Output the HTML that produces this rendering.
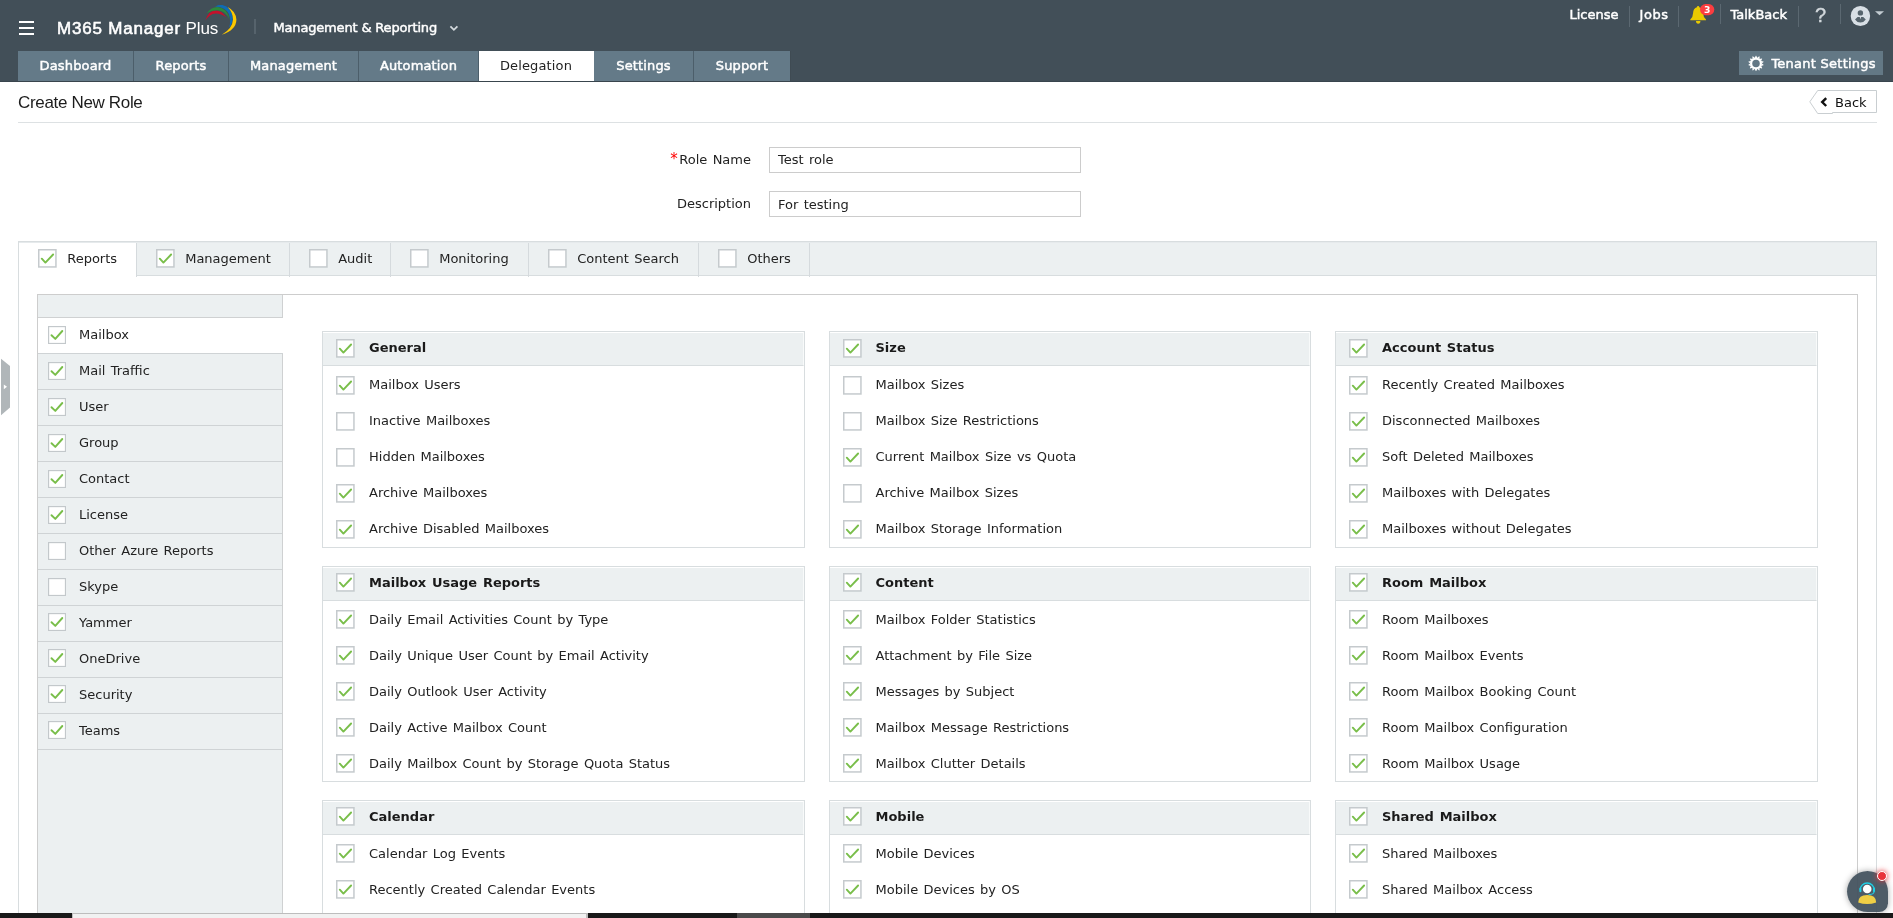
<!DOCTYPE html>
<html lang="en"><head><meta charset="utf-8"><title>M365 Manager Plus</title>
<style>
*{box-sizing:border-box;margin:0;padding:0}
html,body{width:1893px;height:918px;overflow:hidden;background:#fff}
body{position:relative;font-family:"DejaVu Sans","Liberation Sans",sans-serif;font-size:13px;color:#222}
#wrap{position:absolute;left:0;top:0;width:1893px;height:918px;overflow:hidden;will-change:transform;word-spacing:1.2px}
.hdr{position:absolute;left:0;top:0;width:1893px;height:82px;background:#424f58;border-bottom:1px solid #39454d;color:#fff;word-spacing:0}
.abs{position:absolute}
.burger{position:absolute;left:19px;top:21px;width:15px;height:14px}
.burger i{position:absolute;left:0;width:15px;height:2px;background:#fff}
.logo{position:absolute;left:57px;top:17.5px;font-family:"Liberation Sans",sans-serif;font-size:17px;line-height:22px;white-space:nowrap;color:#fff}
.logo b{font-weight:400;letter-spacing:.8px;-webkit-text-stroke:.55px #fff}
.logo span{letter-spacing:-.1px}
.vsep{position:absolute;width:1px;background:#5b6871}
.prod{position:absolute;left:273.5px;top:19px;font-size:13px;line-height:18px;white-space:nowrap;letter-spacing:-.17px;-webkit-text-stroke:.45px #fff}
.nav{position:absolute;left:18px;top:51px;height:30px;display:flex}
.nav a{display:block;height:30px;line-height:29px;text-align:center;letter-spacing:.15px;background:#647a88;border-right:1px solid #4c5e6a;color:#fff;font-size:13px;white-space:nowrap;text-decoration:none;-webkit-text-stroke:.45px #fff}
.nav a.act{background:#fff;color:#222;border-right-color:#fff;-webkit-text-stroke:0}
.top a{position:absolute;top:6px;font-size:13px;line-height:18px;color:#fff;white-space:nowrap;-webkit-text-stroke:.45px #fff}
.top a.q{font-family:"Liberation Sans",sans-serif;font-size:20px;top:4px;line-height:22px;color:#d3d9dd;-webkit-text-stroke:.4px #d3d9dd}
.tenant{position:absolute;left:1739px;top:51px;width:144px;height:24px;background:#637885;font-size:13px;line-height:24px;white-space:nowrap;-webkit-text-stroke:.45px #fff}
.tenant span{position:absolute;left:32.4px;top:.5px;letter-spacing:.25px}
.title{position:absolute;left:18px;top:92px;word-spacing:0;font-family:"Liberation Sans",sans-serif;font-size:17px;line-height:22px;color:#1c1c1c;white-space:nowrap;letter-spacing:-.33px}
.hr{position:absolute;left:18px;top:122px;width:1859px;height:1px;background:#dde1e3}
.backt{position:absolute;left:1835px;top:95px;font-size:13px;line-height:16px;color:#111;letter-spacing:0}
.flabel{position:absolute;font-size:13px;line-height:16px;color:#222;white-space:nowrap;text-align:right;width:200px}
.flabel em{color:#f00;font-style:normal;font-size:15px;line-height:0;position:relative;top:0;margin-right:1.5px}
.finput{position:absolute;left:769px;width:312px;height:26px;border:1px solid #ccc;background:#fff;font-size:13px;line-height:24px;padding-left:8px;color:#222;white-space:nowrap}
.outer{position:absolute;left:18px;top:241px;width:1859px;height:700px;border:1px solid #d8dddf;border-bottom:0;background:#fff}
.tabs{position:absolute;left:0;top:0;width:1857px;height:34px;background:#ecf0f1;border-bottom:1px solid #d8dddf;display:flex}
.tabs::before{content:"";position:absolute;left:0;top:0;width:1857px;height:1px;background:#e6eaec;z-index:2}
.tab{position:relative;height:34px;white-space:nowrap;flex:none}
.tab::after{content:"";position:absolute;right:0;top:1px;width:1px;height:34px;background:#d5dadd}
.tab.act{background:#fff;height:35px}
.tab .cb{position:absolute;left:19px;top:7px}
.tab .lbl{position:absolute;left:48.2px;top:0;line-height:33px}
.cb{display:block}
.inner{position:absolute;left:37px;top:294px;width:1821px;height:640px;border:1px solid #cdcdcd;border-bottom:0;background:#fff}
.side{position:absolute;left:0;top:0;width:245px;height:640px;background:#ecf0f1;border-right:1px solid #cfd1d2}
.sidehead{height:23px;border-bottom:1px solid #cfd1d2}
.sitem{height:36px;border-bottom:1px solid #cfd3d5;position:relative;white-space:nowrap}
.sitem.act{background:#fff;width:245px}
.sitem .cb{position:absolute;left:10px;top:8px}
.sitem.lo .cb{top:7px}
.sitem .lbl{position:absolute;left:41px;top:0;line-height:34px}
.col{position:absolute;top:36px;width:483px}
.c0{left:284px}.c1{left:791px;width:482px}.c2{left:1297px}
.c1 .lbl{margin-left:-.5px}
.card{border:1px solid #d8dddf;margin-bottom:18px;padding-bottom:1px;background:#fff}
.chead{height:34px;background:#ecf0f1;border-top:1px solid #fff;border-right:1px solid #f8fafa;border-bottom:1px solid #d8dddf;position:relative;font-weight:700;color:#1a1a1a;white-space:nowrap}
.chead .cb{position:absolute;left:13px;top:6px}
.chead .lbl{position:absolute;left:46px;top:-1px;line-height:32px}
.row{height:36px;position:relative;white-space:nowrap}
.row .cb{position:absolute;left:13px;top:10px}
.row .lbl{position:absolute;left:46px;top:0;line-height:37px}
.card.k1{padding-bottom:0}
.card.k2{height:180px}
.k1 .cb,.k2 .cb{margin-top:-.6px}
.bottombar{position:absolute;left:0;top:913px;width:1893px;height:5px;background:#191919}
.bottombar .lt{position:absolute;left:72px;top:0;width:516px;height:5px;background:#f1f1f1;border:solid #bdbdbd;border-width:1.5px 2px 0 1.5px}
.bottombar .gr{position:absolute;left:737px;top:0;width:73px;height:5px;background:#4a4a4a}
.chat{position:absolute;left:1847px;top:871px;width:41px;height:41px;background:rgba(67,82,93,.94);border-radius:21px 21px 9px 21px;box-shadow:0 0 6px rgba(0,0,0,.35)}
.chatdot{position:absolute;left:1877px;top:871px;width:10px;height:10px;border-radius:5px;background:#e8333a;border:1px solid #fff;box-shadow:0 0 5px 1px rgba(232,51,58,.7)}

</style></head>
<body>
<div id="wrap">
<div class="hdr">
 <div class="burger"><i style="top:0"></i><i style="top:6px"></i><i style="top:12px"></i></div>
 <div class="logo"><b>M365 Manager</b><span> Plus</span></div>
 <svg class="abs" style="left:200px;top:0" width="40" height="40" viewBox="0 0 40 40">
  <path d="M5.2 20.8 Q8.2 10.4 15.8 10.4 Q22.2 10.6 26.2 17.2 Q21.4 13.4 15.8 13.4 Q9.6 13.6 5.2 20.8Z" fill="#c4112b"/>
  <path d="M6.6 13.2 Q11.5 7 17.8 7.1 Q27.2 8.2 29.8 19.8 Q25.4 10.6 17.6 10.3 Q11.8 10 6.6 13.2Z" fill="#2c8a3c"/>
  <path d="M15 6.4 Q18.6 4.6 22.4 5 Q31.4 7.2 32.7 17.4 Q32.8 23.4 29.2 27.6 Q31.4 20 28.6 13.6 Q25.2 6.8 15 6.4Z" fill="#0e6cb6"/>
  <path d="M27.6 7 Q36 11.2 36.4 19.8 Q36.2 30 21.8 34.8 Q32.6 28.6 33 19.6 Q33 12.6 27.6 7Z" fill="#fcc800"/>
 </svg>
 <div class="vsep" style="left:254px;top:19px;height:15px;width:2px;background:#56636c"></div>
 <div class="prod">Management &amp; Reporting</div>
 <svg class="abs" style="left:448px;top:23px" width="12" height="10" viewBox="0 0 12 10"><path d="M2.4 3.3 L5.9 6.8 L9.4 3.3" fill="none" stroke="#d3d9dd" stroke-width="1.8"/></svg>
 <div class="nav"><a style="width:116px">Dashboard</a><a style="width:95px">Reports</a><a style="width:130px">Management</a><a style="width:120px">Automation</a><a class="act" style="width:115px">Delegation</a><a style="width:100px">Settings</a><a style="width:97px;border-right-color:#3f4b53">Support</a></div>
 <div class="top">
  <a style="left:1569.5px">License</a>
  <div class="vsep" style="left:1629px;top:6px;height:21px"></div>
  <a style="left:1639.5px;letter-spacing:.6px">Jobs</a>
  <div class="vsep" style="left:1678px;top:6px;height:21px"></div>
  <svg class="abs" style="left:1688px;top:3px" width="28" height="24" viewBox="0 0 28 24">
   <path d="M10.1 3 Q11.3 3 11.3 4.2 Q15 5.4 15.1 10 Q15.2 14 18 16.6 L18 17.3 L2.3 17.3 L2.3 16.6 Q5 14 5.1 10 Q5.2 5.4 8.9 4.2 Q8.9 3 10.1 3Z" fill="#e9ca00"/>
   <path d="M8 18 L12.4 18 Q12.4 20.8 10.2 20.8 Q8 20.8 8 18Z" fill="#e9ca00"/>
   <rect x="12" y="1" width="14.3" height="11.2" rx="5.6" fill="#fb3d40"/>
   <text x="19.15" y="9.95" text-anchor="middle" font-family="DejaVu Sans, Liberation Sans, sans-serif" font-weight="700" font-size="9.2" fill="#fff">3</text>
  </svg>
  <div class="vsep" style="left:1720px;top:4px;height:20px"></div>
  <a style="left:1730.5px">TalkBack</a>
  <div class="vsep" style="left:1798px;top:6px;height:21px"></div>
  <a class="q" style="left:1815px">?</a>
  <div class="vsep" style="left:1840px;top:4px;height:20px"></div>
  <svg class="abs" style="left:1848px;top:3px" width="40" height="26" viewBox="0 0 40 26">
   <ellipse cx="12.4" cy="13" rx="9.7" ry="10.1" fill="#d8dfe5"/>
   <circle cx="12.4" cy="9.9" r="2.7" fill="#56646d"/>
   <path d="M7 16.4 L9.6 14.1 L11.7 14.1 L12.4 16.2 L13.1 14.1 L15.2 14.1 L17.8 16.4 Q15.6 19.6 12.4 19.6 Q9.2 19.6 7 16.4Z" fill="#56646d"/>
   <path d="M27 8.2 L36 8.2 L31.5 12.3Z" fill="#c3ccd2"/>
  </svg>
 </div>
 <div class="tenant">
  <svg class="abs" style="left:8px;top:4px" width="17" height="17" viewBox="-9 -8.4 17 17"><g fill="#fff"><circle r="5.9"/><path d="M-1.35 -5.4 L-0.25 -7.7 L0.25 -7.7 L1.35 -5.4Z" transform="rotate(0.00)"/><path d="M-1.35 -5.4 L-0.25 -7.7 L0.25 -7.7 L1.35 -5.4Z" transform="rotate(25.71)"/><path d="M-1.35 -5.4 L-0.25 -7.7 L0.25 -7.7 L1.35 -5.4Z" transform="rotate(51.43)"/><path d="M-1.35 -5.4 L-0.25 -7.7 L0.25 -7.7 L1.35 -5.4Z" transform="rotate(77.14)"/><path d="M-1.35 -5.4 L-0.25 -7.7 L0.25 -7.7 L1.35 -5.4Z" transform="rotate(102.86)"/><path d="M-1.35 -5.4 L-0.25 -7.7 L0.25 -7.7 L1.35 -5.4Z" transform="rotate(128.57)"/><path d="M-1.35 -5.4 L-0.25 -7.7 L0.25 -7.7 L1.35 -5.4Z" transform="rotate(154.29)"/><path d="M-1.35 -5.4 L-0.25 -7.7 L0.25 -7.7 L1.35 -5.4Z" transform="rotate(180.00)"/><path d="M-1.35 -5.4 L-0.25 -7.7 L0.25 -7.7 L1.35 -5.4Z" transform="rotate(205.71)"/><path d="M-1.35 -5.4 L-0.25 -7.7 L0.25 -7.7 L1.35 -5.4Z" transform="rotate(231.43)"/><path d="M-1.35 -5.4 L-0.25 -7.7 L0.25 -7.7 L1.35 -5.4Z" transform="rotate(257.14)"/><path d="M-1.35 -5.4 L-0.25 -7.7 L0.25 -7.7 L1.35 -5.4Z" transform="rotate(282.86)"/><path d="M-1.35 -5.4 L-0.25 -7.7 L0.25 -7.7 L1.35 -5.4Z" transform="rotate(308.57)"/><path d="M-1.35 -5.4 L-0.25 -7.7 L0.25 -7.7 L1.35 -5.4Z" transform="rotate(334.29)"/></g><circle r="3.75" fill="#637885"/></svg>
  <span>Tenant Settings</span></div>
</div>
<div class="title">Create New Role</div>
<svg class="abs" style="left:1805px;top:88px" width="76" height="28" viewBox="0 0 76 28"><path d="M12.7 2.5 L71.5 2.5 L71.5 24.5 L27.5 24.5 L27.5 25.5 L12.7 25.5 L4.8 13.8Z" fill="#fff" stroke="#c9ced1" stroke-width="1"/><path d="M21.2 10.2 L17.2 14.1 L21.2 18" fill="none" stroke="#111" stroke-width="2.4"/></svg>
<div class="backt">Back</div>
<div class="hr"></div>
<div class="flabel" style="left:551px;top:152px"><em>*</em>Role Name</div>
<div class="finput" style="top:147px">Test role</div>
<div class="flabel" style="left:551px;top:196px">Description</div>
<div class="finput" style="top:191px;line-height:26px">For testing</div>
<div class="outer">
 <div class="tabs">
  <div class="tab act" style="width:118px"><svg class="cb" width="19" height="19" viewBox="0 0 19 19"><rect x="0.75" y="0.75" width="17.2" height="17.2" fill="#fff" stroke="#c5cacd" stroke-width="1.5"/><path d="M3.8 9.7 L7.4 13.6 L15.1 5.5" fill="none" stroke="#79be4a" stroke-width="1.9" stroke-linecap="round" stroke-linejoin="round"/></svg><span class="lbl">Reports</span></div>
  <div class="tab" style="width:153px"><svg class="cb" width="19" height="19" viewBox="0 0 19 19"><rect x="0.75" y="0.75" width="17.2" height="17.2" fill="#fff" stroke="#c5cacd" stroke-width="1.5"/><path d="M3.8 9.7 L7.4 13.6 L15.1 5.5" fill="none" stroke="#79be4a" stroke-width="1.9" stroke-linecap="round" stroke-linejoin="round"/></svg><span class="lbl">Management</span></div>
  <div class="tab" style="width:101px"><svg class="cb" width="19" height="19" viewBox="0 0 19 19"><rect x="0.75" y="0.75" width="17.2" height="17.2" fill="#fff" stroke="#c5cacd" stroke-width="1.5"/></svg><span class="lbl">Audit</span></div>
  <div class="tab" style="width:138px"><svg class="cb" width="19" height="19" viewBox="0 0 19 19"><rect x="0.75" y="0.75" width="17.2" height="17.2" fill="#fff" stroke="#c5cacd" stroke-width="1.5"/></svg><span class="lbl">Monitoring</span></div>
  <div class="tab" style="width:170px"><svg class="cb" width="19" height="19" viewBox="0 0 19 19"><rect x="0.75" y="0.75" width="17.2" height="17.2" fill="#fff" stroke="#c5cacd" stroke-width="1.5"/></svg><span class="lbl">Content Search</span></div>
  <div class="tab" style="width:111px"><svg class="cb" width="19" height="19" viewBox="0 0 19 19"><rect x="0.75" y="0.75" width="17.2" height="17.2" fill="#fff" stroke="#c5cacd" stroke-width="1.5"/></svg><span class="lbl">Others</span></div>
 </div>
</div>
<div class="inner">
<div class="side">
<div class="sidehead"></div>
<div class="sitem act"><svg class="cb" width="18" height="18" viewBox="0 0 18 18"><rect x="0.55" y="0.55" width="16.95" height="16.95" fill="#fff" stroke="#c3c8cb" stroke-width="1.25"/><path d="M3.5 9.2 L7.3 12.9 L14.3 5" fill="none" stroke="#79be4a" stroke-width="1.9" stroke-linecap="round" stroke-linejoin="round"/></svg><span class="lbl">Mailbox</span></div>
<div class="sitem"><svg class="cb" width="18" height="18" viewBox="0 0 18 18"><rect x="0.55" y="0.55" width="16.95" height="16.95" fill="#fff" stroke="#c3c8cb" stroke-width="1.25"/><path d="M3.5 9.2 L7.3 12.9 L14.3 5" fill="none" stroke="#79be4a" stroke-width="1.9" stroke-linecap="round" stroke-linejoin="round"/></svg><span class="lbl">Mail Traffic</span></div>
<div class="sitem"><svg class="cb" width="18" height="18" viewBox="0 0 18 18"><rect x="0.55" y="0.55" width="16.95" height="16.95" fill="#fff" stroke="#c3c8cb" stroke-width="1.25"/><path d="M3.5 9.2 L7.3 12.9 L14.3 5" fill="none" stroke="#79be4a" stroke-width="1.9" stroke-linecap="round" stroke-linejoin="round"/></svg><span class="lbl">User</span></div>
<div class="sitem"><svg class="cb" width="18" height="18" viewBox="0 0 18 18"><rect x="0.55" y="0.55" width="16.95" height="16.95" fill="#fff" stroke="#c3c8cb" stroke-width="1.25"/><path d="M3.5 9.2 L7.3 12.9 L14.3 5" fill="none" stroke="#79be4a" stroke-width="1.9" stroke-linecap="round" stroke-linejoin="round"/></svg><span class="lbl">Group</span></div>
<div class="sitem"><svg class="cb" width="18" height="18" viewBox="0 0 18 18"><rect x="0.55" y="0.55" width="16.95" height="16.95" fill="#fff" stroke="#c3c8cb" stroke-width="1.25"/><path d="M3.5 9.2 L7.3 12.9 L14.3 5" fill="none" stroke="#79be4a" stroke-width="1.9" stroke-linecap="round" stroke-linejoin="round"/></svg><span class="lbl">Contact</span></div>
<div class="sitem"><svg class="cb" width="18" height="18" viewBox="0 0 18 18"><rect x="0.55" y="0.55" width="16.95" height="16.95" fill="#fff" stroke="#c3c8cb" stroke-width="1.25"/><path d="M3.5 9.2 L7.3 12.9 L14.3 5" fill="none" stroke="#79be4a" stroke-width="1.9" stroke-linecap="round" stroke-linejoin="round"/></svg><span class="lbl">License</span></div>
<div class="sitem"><svg class="cb" width="18" height="18" viewBox="0 0 18 18"><rect x="0.55" y="0.55" width="16.95" height="16.95" fill="#fff" stroke="#c3c8cb" stroke-width="1.25"/></svg><span class="lbl">Other Azure Reports</span></div>
<div class="sitem"><svg class="cb" width="18" height="18" viewBox="0 0 18 18"><rect x="0.55" y="0.55" width="16.95" height="16.95" fill="#fff" stroke="#c3c8cb" stroke-width="1.25"/></svg><span class="lbl">Skype</span></div>
<div class="sitem lo"><svg class="cb" width="18" height="18" viewBox="0 0 18 18"><rect x="0.55" y="0.55" width="16.95" height="16.95" fill="#fff" stroke="#c3c8cb" stroke-width="1.25"/><path d="M3.5 9.2 L7.3 12.9 L14.3 5" fill="none" stroke="#79be4a" stroke-width="1.9" stroke-linecap="round" stroke-linejoin="round"/></svg><span class="lbl">Yammer</span></div>
<div class="sitem lo"><svg class="cb" width="18" height="18" viewBox="0 0 18 18"><rect x="0.55" y="0.55" width="16.95" height="16.95" fill="#fff" stroke="#c3c8cb" stroke-width="1.25"/><path d="M3.5 9.2 L7.3 12.9 L14.3 5" fill="none" stroke="#79be4a" stroke-width="1.9" stroke-linecap="round" stroke-linejoin="round"/></svg><span class="lbl">OneDrive</span></div>
<div class="sitem lo"><svg class="cb" width="18" height="18" viewBox="0 0 18 18"><rect x="0.55" y="0.55" width="16.95" height="16.95" fill="#fff" stroke="#c3c8cb" stroke-width="1.25"/><path d="M3.5 9.2 L7.3 12.9 L14.3 5" fill="none" stroke="#79be4a" stroke-width="1.9" stroke-linecap="round" stroke-linejoin="round"/></svg><span class="lbl">Security</span></div>
<div class="sitem lo"><svg class="cb" width="18" height="18" viewBox="0 0 18 18"><rect x="0.55" y="0.55" width="16.95" height="16.95" fill="#fff" stroke="#c3c8cb" stroke-width="1.25"/><path d="M3.5 9.2 L7.3 12.9 L14.3 5" fill="none" stroke="#79be4a" stroke-width="1.9" stroke-linecap="round" stroke-linejoin="round"/></svg><span class="lbl">Teams</span></div>
</div>
<div class="col c0">
<div class="card k0"><div class="chead"><svg class="cb" width="19" height="19" viewBox="0 0 19 19"><rect x="0.75" y="0.75" width="17.2" height="17.2" fill="#fff" stroke="#c5cacd" stroke-width="1.5"/><path d="M3.8 9.7 L7.4 13.6 L15.1 5.5" fill="none" stroke="#79be4a" stroke-width="1.9" stroke-linecap="round" stroke-linejoin="round"/></svg><span class="lbl">General</span></div>
<div class="row"><svg class="cb" width="19" height="19" viewBox="0 0 19 19"><rect x="0.75" y="0.75" width="17.2" height="17.2" fill="#fff" stroke="#c5cacd" stroke-width="1.5"/><path d="M3.8 9.7 L7.4 13.6 L15.1 5.5" fill="none" stroke="#79be4a" stroke-width="1.9" stroke-linecap="round" stroke-linejoin="round"/></svg><span class="lbl">Mailbox Users</span></div>
<div class="row"><svg class="cb" width="19" height="19" viewBox="0 0 19 19"><rect x="0.75" y="0.75" width="17.2" height="17.2" fill="#fff" stroke="#c5cacd" stroke-width="1.5"/></svg><span class="lbl">Inactive Mailboxes</span></div>
<div class="row"><svg class="cb" width="19" height="19" viewBox="0 0 19 19"><rect x="0.75" y="0.75" width="17.2" height="17.2" fill="#fff" stroke="#c5cacd" stroke-width="1.5"/></svg><span class="lbl">Hidden Mailboxes</span></div>
<div class="row"><svg class="cb" width="19" height="19" viewBox="0 0 19 19"><rect x="0.75" y="0.75" width="17.2" height="17.2" fill="#fff" stroke="#c5cacd" stroke-width="1.5"/><path d="M3.8 9.7 L7.4 13.6 L15.1 5.5" fill="none" stroke="#79be4a" stroke-width="1.9" stroke-linecap="round" stroke-linejoin="round"/></svg><span class="lbl">Archive Mailboxes</span></div>
<div class="row"><svg class="cb" width="19" height="19" viewBox="0 0 19 19"><rect x="0.75" y="0.75" width="17.2" height="17.2" fill="#fff" stroke="#c5cacd" stroke-width="1.5"/><path d="M3.8 9.7 L7.4 13.6 L15.1 5.5" fill="none" stroke="#79be4a" stroke-width="1.9" stroke-linecap="round" stroke-linejoin="round"/></svg><span class="lbl">Archive Disabled Mailboxes</span></div>
</div>
<div class="card k1"><div class="chead"><svg class="cb" width="19" height="19" viewBox="0 0 19 19"><rect x="0.75" y="0.75" width="17.2" height="17.2" fill="#fff" stroke="#c5cacd" stroke-width="1.5"/><path d="M3.8 9.7 L7.4 13.6 L15.1 5.5" fill="none" stroke="#79be4a" stroke-width="1.9" stroke-linecap="round" stroke-linejoin="round"/></svg><span class="lbl">Mailbox Usage Reports</span></div>
<div class="row"><svg class="cb" width="19" height="19" viewBox="0 0 19 19"><rect x="0.75" y="0.75" width="17.2" height="17.2" fill="#fff" stroke="#c5cacd" stroke-width="1.5"/><path d="M3.8 9.7 L7.4 13.6 L15.1 5.5" fill="none" stroke="#79be4a" stroke-width="1.9" stroke-linecap="round" stroke-linejoin="round"/></svg><span class="lbl">Daily Email Activities Count by Type</span></div>
<div class="row"><svg class="cb" width="19" height="19" viewBox="0 0 19 19"><rect x="0.75" y="0.75" width="17.2" height="17.2" fill="#fff" stroke="#c5cacd" stroke-width="1.5"/><path d="M3.8 9.7 L7.4 13.6 L15.1 5.5" fill="none" stroke="#79be4a" stroke-width="1.9" stroke-linecap="round" stroke-linejoin="round"/></svg><span class="lbl">Daily Unique User Count by Email Activity</span></div>
<div class="row"><svg class="cb" width="19" height="19" viewBox="0 0 19 19"><rect x="0.75" y="0.75" width="17.2" height="17.2" fill="#fff" stroke="#c5cacd" stroke-width="1.5"/><path d="M3.8 9.7 L7.4 13.6 L15.1 5.5" fill="none" stroke="#79be4a" stroke-width="1.9" stroke-linecap="round" stroke-linejoin="round"/></svg><span class="lbl">Daily Outlook User Activity</span></div>
<div class="row"><svg class="cb" width="19" height="19" viewBox="0 0 19 19"><rect x="0.75" y="0.75" width="17.2" height="17.2" fill="#fff" stroke="#c5cacd" stroke-width="1.5"/><path d="M3.8 9.7 L7.4 13.6 L15.1 5.5" fill="none" stroke="#79be4a" stroke-width="1.9" stroke-linecap="round" stroke-linejoin="round"/></svg><span class="lbl">Daily Active Mailbox Count</span></div>
<div class="row"><svg class="cb" width="19" height="19" viewBox="0 0 19 19"><rect x="0.75" y="0.75" width="17.2" height="17.2" fill="#fff" stroke="#c5cacd" stroke-width="1.5"/><path d="M3.8 9.7 L7.4 13.6 L15.1 5.5" fill="none" stroke="#79be4a" stroke-width="1.9" stroke-linecap="round" stroke-linejoin="round"/></svg><span class="lbl">Daily Mailbox Count by Storage Quota Status</span></div>
</div>
<div class="card k2"><div class="chead"><svg class="cb" width="19" height="19" viewBox="0 0 19 19"><rect x="0.75" y="0.75" width="17.2" height="17.2" fill="#fff" stroke="#c5cacd" stroke-width="1.5"/><path d="M3.8 9.7 L7.4 13.6 L15.1 5.5" fill="none" stroke="#79be4a" stroke-width="1.9" stroke-linecap="round" stroke-linejoin="round"/></svg><span class="lbl">Calendar</span></div>
<div class="row"><svg class="cb" width="19" height="19" viewBox="0 0 19 19"><rect x="0.75" y="0.75" width="17.2" height="17.2" fill="#fff" stroke="#c5cacd" stroke-width="1.5"/><path d="M3.8 9.7 L7.4 13.6 L15.1 5.5" fill="none" stroke="#79be4a" stroke-width="1.9" stroke-linecap="round" stroke-linejoin="round"/></svg><span class="lbl">Calendar Log Events</span></div>
<div class="row"><svg class="cb" width="19" height="19" viewBox="0 0 19 19"><rect x="0.75" y="0.75" width="17.2" height="17.2" fill="#fff" stroke="#c5cacd" stroke-width="1.5"/><path d="M3.8 9.7 L7.4 13.6 L15.1 5.5" fill="none" stroke="#79be4a" stroke-width="1.9" stroke-linecap="round" stroke-linejoin="round"/></svg><span class="lbl">Recently Created Calendar Events</span></div>
</div>
</div>
<div class="col c1">
<div class="card k0"><div class="chead"><svg class="cb" width="19" height="19" viewBox="0 0 19 19"><rect x="0.75" y="0.75" width="17.2" height="17.2" fill="#fff" stroke="#c5cacd" stroke-width="1.5"/><path d="M3.8 9.7 L7.4 13.6 L15.1 5.5" fill="none" stroke="#79be4a" stroke-width="1.9" stroke-linecap="round" stroke-linejoin="round"/></svg><span class="lbl">Size</span></div>
<div class="row"><svg class="cb" width="19" height="19" viewBox="0 0 19 19"><rect x="0.75" y="0.75" width="17.2" height="17.2" fill="#fff" stroke="#c5cacd" stroke-width="1.5"/></svg><span class="lbl">Mailbox Sizes</span></div>
<div class="row"><svg class="cb" width="19" height="19" viewBox="0 0 19 19"><rect x="0.75" y="0.75" width="17.2" height="17.2" fill="#fff" stroke="#c5cacd" stroke-width="1.5"/></svg><span class="lbl">Mailbox Size Restrictions</span></div>
<div class="row"><svg class="cb" width="19" height="19" viewBox="0 0 19 19"><rect x="0.75" y="0.75" width="17.2" height="17.2" fill="#fff" stroke="#c5cacd" stroke-width="1.5"/><path d="M3.8 9.7 L7.4 13.6 L15.1 5.5" fill="none" stroke="#79be4a" stroke-width="1.9" stroke-linecap="round" stroke-linejoin="round"/></svg><span class="lbl">Current Mailbox Size vs Quota</span></div>
<div class="row"><svg class="cb" width="19" height="19" viewBox="0 0 19 19"><rect x="0.75" y="0.75" width="17.2" height="17.2" fill="#fff" stroke="#c5cacd" stroke-width="1.5"/></svg><span class="lbl">Archive Mailbox Sizes</span></div>
<div class="row"><svg class="cb" width="19" height="19" viewBox="0 0 19 19"><rect x="0.75" y="0.75" width="17.2" height="17.2" fill="#fff" stroke="#c5cacd" stroke-width="1.5"/><path d="M3.8 9.7 L7.4 13.6 L15.1 5.5" fill="none" stroke="#79be4a" stroke-width="1.9" stroke-linecap="round" stroke-linejoin="round"/></svg><span class="lbl">Mailbox Storage Information</span></div>
</div>
<div class="card k1"><div class="chead"><svg class="cb" width="19" height="19" viewBox="0 0 19 19"><rect x="0.75" y="0.75" width="17.2" height="17.2" fill="#fff" stroke="#c5cacd" stroke-width="1.5"/><path d="M3.8 9.7 L7.4 13.6 L15.1 5.5" fill="none" stroke="#79be4a" stroke-width="1.9" stroke-linecap="round" stroke-linejoin="round"/></svg><span class="lbl">Content</span></div>
<div class="row"><svg class="cb" width="19" height="19" viewBox="0 0 19 19"><rect x="0.75" y="0.75" width="17.2" height="17.2" fill="#fff" stroke="#c5cacd" stroke-width="1.5"/><path d="M3.8 9.7 L7.4 13.6 L15.1 5.5" fill="none" stroke="#79be4a" stroke-width="1.9" stroke-linecap="round" stroke-linejoin="round"/></svg><span class="lbl">Mailbox Folder Statistics</span></div>
<div class="row"><svg class="cb" width="19" height="19" viewBox="0 0 19 19"><rect x="0.75" y="0.75" width="17.2" height="17.2" fill="#fff" stroke="#c5cacd" stroke-width="1.5"/><path d="M3.8 9.7 L7.4 13.6 L15.1 5.5" fill="none" stroke="#79be4a" stroke-width="1.9" stroke-linecap="round" stroke-linejoin="round"/></svg><span class="lbl">Attachment by File Size</span></div>
<div class="row"><svg class="cb" width="19" height="19" viewBox="0 0 19 19"><rect x="0.75" y="0.75" width="17.2" height="17.2" fill="#fff" stroke="#c5cacd" stroke-width="1.5"/><path d="M3.8 9.7 L7.4 13.6 L15.1 5.5" fill="none" stroke="#79be4a" stroke-width="1.9" stroke-linecap="round" stroke-linejoin="round"/></svg><span class="lbl">Messages by Subject</span></div>
<div class="row"><svg class="cb" width="19" height="19" viewBox="0 0 19 19"><rect x="0.75" y="0.75" width="17.2" height="17.2" fill="#fff" stroke="#c5cacd" stroke-width="1.5"/><path d="M3.8 9.7 L7.4 13.6 L15.1 5.5" fill="none" stroke="#79be4a" stroke-width="1.9" stroke-linecap="round" stroke-linejoin="round"/></svg><span class="lbl">Mailbox Message Restrictions</span></div>
<div class="row"><svg class="cb" width="19" height="19" viewBox="0 0 19 19"><rect x="0.75" y="0.75" width="17.2" height="17.2" fill="#fff" stroke="#c5cacd" stroke-width="1.5"/><path d="M3.8 9.7 L7.4 13.6 L15.1 5.5" fill="none" stroke="#79be4a" stroke-width="1.9" stroke-linecap="round" stroke-linejoin="round"/></svg><span class="lbl">Mailbox Clutter Details</span></div>
</div>
<div class="card k2"><div class="chead"><svg class="cb" width="19" height="19" viewBox="0 0 19 19"><rect x="0.75" y="0.75" width="17.2" height="17.2" fill="#fff" stroke="#c5cacd" stroke-width="1.5"/><path d="M3.8 9.7 L7.4 13.6 L15.1 5.5" fill="none" stroke="#79be4a" stroke-width="1.9" stroke-linecap="round" stroke-linejoin="round"/></svg><span class="lbl">Mobile</span></div>
<div class="row"><svg class="cb" width="19" height="19" viewBox="0 0 19 19"><rect x="0.75" y="0.75" width="17.2" height="17.2" fill="#fff" stroke="#c5cacd" stroke-width="1.5"/><path d="M3.8 9.7 L7.4 13.6 L15.1 5.5" fill="none" stroke="#79be4a" stroke-width="1.9" stroke-linecap="round" stroke-linejoin="round"/></svg><span class="lbl">Mobile Devices</span></div>
<div class="row"><svg class="cb" width="19" height="19" viewBox="0 0 19 19"><rect x="0.75" y="0.75" width="17.2" height="17.2" fill="#fff" stroke="#c5cacd" stroke-width="1.5"/><path d="M3.8 9.7 L7.4 13.6 L15.1 5.5" fill="none" stroke="#79be4a" stroke-width="1.9" stroke-linecap="round" stroke-linejoin="round"/></svg><span class="lbl">Mobile Devices by OS</span></div>
</div>
</div>
<div class="col c2">
<div class="card k0"><div class="chead"><svg class="cb" width="19" height="19" viewBox="0 0 19 19"><rect x="0.75" y="0.75" width="17.2" height="17.2" fill="#fff" stroke="#c5cacd" stroke-width="1.5"/><path d="M3.8 9.7 L7.4 13.6 L15.1 5.5" fill="none" stroke="#79be4a" stroke-width="1.9" stroke-linecap="round" stroke-linejoin="round"/></svg><span class="lbl">Account Status</span></div>
<div class="row"><svg class="cb" width="19" height="19" viewBox="0 0 19 19"><rect x="0.75" y="0.75" width="17.2" height="17.2" fill="#fff" stroke="#c5cacd" stroke-width="1.5"/><path d="M3.8 9.7 L7.4 13.6 L15.1 5.5" fill="none" stroke="#79be4a" stroke-width="1.9" stroke-linecap="round" stroke-linejoin="round"/></svg><span class="lbl">Recently Created Mailboxes</span></div>
<div class="row"><svg class="cb" width="19" height="19" viewBox="0 0 19 19"><rect x="0.75" y="0.75" width="17.2" height="17.2" fill="#fff" stroke="#c5cacd" stroke-width="1.5"/><path d="M3.8 9.7 L7.4 13.6 L15.1 5.5" fill="none" stroke="#79be4a" stroke-width="1.9" stroke-linecap="round" stroke-linejoin="round"/></svg><span class="lbl">Disconnected Mailboxes</span></div>
<div class="row"><svg class="cb" width="19" height="19" viewBox="0 0 19 19"><rect x="0.75" y="0.75" width="17.2" height="17.2" fill="#fff" stroke="#c5cacd" stroke-width="1.5"/><path d="M3.8 9.7 L7.4 13.6 L15.1 5.5" fill="none" stroke="#79be4a" stroke-width="1.9" stroke-linecap="round" stroke-linejoin="round"/></svg><span class="lbl">Soft Deleted Mailboxes</span></div>
<div class="row"><svg class="cb" width="19" height="19" viewBox="0 0 19 19"><rect x="0.75" y="0.75" width="17.2" height="17.2" fill="#fff" stroke="#c5cacd" stroke-width="1.5"/><path d="M3.8 9.7 L7.4 13.6 L15.1 5.5" fill="none" stroke="#79be4a" stroke-width="1.9" stroke-linecap="round" stroke-linejoin="round"/></svg><span class="lbl">Mailboxes with Delegates</span></div>
<div class="row"><svg class="cb" width="19" height="19" viewBox="0 0 19 19"><rect x="0.75" y="0.75" width="17.2" height="17.2" fill="#fff" stroke="#c5cacd" stroke-width="1.5"/><path d="M3.8 9.7 L7.4 13.6 L15.1 5.5" fill="none" stroke="#79be4a" stroke-width="1.9" stroke-linecap="round" stroke-linejoin="round"/></svg><span class="lbl">Mailboxes without Delegates</span></div>
</div>
<div class="card k1"><div class="chead"><svg class="cb" width="19" height="19" viewBox="0 0 19 19"><rect x="0.75" y="0.75" width="17.2" height="17.2" fill="#fff" stroke="#c5cacd" stroke-width="1.5"/><path d="M3.8 9.7 L7.4 13.6 L15.1 5.5" fill="none" stroke="#79be4a" stroke-width="1.9" stroke-linecap="round" stroke-linejoin="round"/></svg><span class="lbl">Room Mailbox</span></div>
<div class="row"><svg class="cb" width="19" height="19" viewBox="0 0 19 19"><rect x="0.75" y="0.75" width="17.2" height="17.2" fill="#fff" stroke="#c5cacd" stroke-width="1.5"/><path d="M3.8 9.7 L7.4 13.6 L15.1 5.5" fill="none" stroke="#79be4a" stroke-width="1.9" stroke-linecap="round" stroke-linejoin="round"/></svg><span class="lbl">Room Mailboxes</span></div>
<div class="row"><svg class="cb" width="19" height="19" viewBox="0 0 19 19"><rect x="0.75" y="0.75" width="17.2" height="17.2" fill="#fff" stroke="#c5cacd" stroke-width="1.5"/><path d="M3.8 9.7 L7.4 13.6 L15.1 5.5" fill="none" stroke="#79be4a" stroke-width="1.9" stroke-linecap="round" stroke-linejoin="round"/></svg><span class="lbl">Room Mailbox Events</span></div>
<div class="row"><svg class="cb" width="19" height="19" viewBox="0 0 19 19"><rect x="0.75" y="0.75" width="17.2" height="17.2" fill="#fff" stroke="#c5cacd" stroke-width="1.5"/><path d="M3.8 9.7 L7.4 13.6 L15.1 5.5" fill="none" stroke="#79be4a" stroke-width="1.9" stroke-linecap="round" stroke-linejoin="round"/></svg><span class="lbl">Room Mailbox Booking Count</span></div>
<div class="row"><svg class="cb" width="19" height="19" viewBox="0 0 19 19"><rect x="0.75" y="0.75" width="17.2" height="17.2" fill="#fff" stroke="#c5cacd" stroke-width="1.5"/><path d="M3.8 9.7 L7.4 13.6 L15.1 5.5" fill="none" stroke="#79be4a" stroke-width="1.9" stroke-linecap="round" stroke-linejoin="round"/></svg><span class="lbl">Room Mailbox Configuration</span></div>
<div class="row"><svg class="cb" width="19" height="19" viewBox="0 0 19 19"><rect x="0.75" y="0.75" width="17.2" height="17.2" fill="#fff" stroke="#c5cacd" stroke-width="1.5"/><path d="M3.8 9.7 L7.4 13.6 L15.1 5.5" fill="none" stroke="#79be4a" stroke-width="1.9" stroke-linecap="round" stroke-linejoin="round"/></svg><span class="lbl">Room Mailbox Usage</span></div>
</div>
<div class="card k2"><div class="chead"><svg class="cb" width="19" height="19" viewBox="0 0 19 19"><rect x="0.75" y="0.75" width="17.2" height="17.2" fill="#fff" stroke="#c5cacd" stroke-width="1.5"/><path d="M3.8 9.7 L7.4 13.6 L15.1 5.5" fill="none" stroke="#79be4a" stroke-width="1.9" stroke-linecap="round" stroke-linejoin="round"/></svg><span class="lbl">Shared Mailbox</span></div>
<div class="row"><svg class="cb" width="19" height="19" viewBox="0 0 19 19"><rect x="0.75" y="0.75" width="17.2" height="17.2" fill="#fff" stroke="#c5cacd" stroke-width="1.5"/><path d="M3.8 9.7 L7.4 13.6 L15.1 5.5" fill="none" stroke="#79be4a" stroke-width="1.9" stroke-linecap="round" stroke-linejoin="round"/></svg><span class="lbl">Shared Mailboxes</span></div>
<div class="row"><svg class="cb" width="19" height="19" viewBox="0 0 19 19"><rect x="0.75" y="0.75" width="17.2" height="17.2" fill="#fff" stroke="#c5cacd" stroke-width="1.5"/><path d="M3.8 9.7 L7.4 13.6 L15.1 5.5" fill="none" stroke="#79be4a" stroke-width="1.9" stroke-linecap="round" stroke-linejoin="round"/></svg><span class="lbl">Shared Mailbox Access</span></div>
</div>
</div>
</div>
<svg class="abs" style="left:0;top:355px" width="12" height="64" viewBox="0 0 12 64"><path d="M1 3.8 L10 11 L10 52.6 L1 60.3Z" fill="#b0b6b9"/><path d="M3.8 29.4 L7 31.8 L3.8 34.2Z" fill="#fff"/></svg>
<div class="chat"></div>
<svg class="abs" style="left:1847px;top:871px" width="41" height="41" viewBox="0 0 41 41">
 <path d="M13.2 19 A7 7 0 0 1 27.2 19" fill="none" stroke="#1fd0e6" stroke-width="1.3"/>
 <rect x="12.4" y="16.6" width="2" height="4.6" rx="1" fill="#1fd0e6"/><rect x="26" y="16.6" width="2" height="4.6" rx="1" fill="#1fd0e6"/>
 <path d="M27 21 Q26.6 23.6 21.6 23.5" fill="none" stroke="#1fd0e6" stroke-width="1.1"/>
 <circle cx="20.2" cy="18" r="4.3" fill="#fff"/>
 <path d="M11.2 31.4 Q11.4 24 20.2 24 Q29 24 29.2 31.4 Q20.2 34.6 11.2 31.4Z" fill="#f0cf45"/>
</svg>
<div class="chatdot"></div>
<div class="bottombar"><div class="lt"></div><div class="gr"></div></div>
</div>
</body></html>
